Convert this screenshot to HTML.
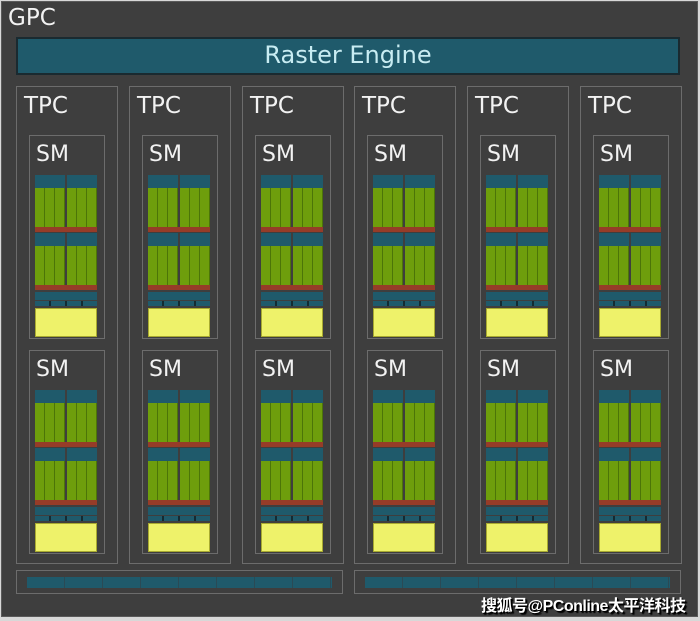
<!DOCTYPE html>
<html><head><meta charset="utf-8"><style>
*{margin:0;padding:0;box-sizing:border-box}
body{width:700px;height:621px;background:#d8d8d8;position:relative;overflow:hidden;font-family:"DejaVu Sans","Liberation Sans",sans-serif}
.gpc{position:absolute;left:1px;top:1px;width:697px;height:616px;background:#3e3e3e;border:1px solid #5a5a5a}
.t{position:absolute;color:#f2f2f2;font-size:22px;line-height:1}
.re{position:absolute;left:16px;top:37px;width:664px;height:38px;background:#1f5a6b;border:2px solid #1a2a30;color:#c8ecf2;font-size:24px;text-align:center;line-height:33px}
.tpc{position:absolute;top:86px;width:102px;height:478px;border:1px solid #6c6c6c}
.tpc span{position:absolute;left:7px;top:6px;color:#f2f2f2;font-size:23px}
.sm{position:absolute;left:12px;width:76px;height:204px;border:1px solid #6c6c6c}
.sm span{position:absolute;left:6px;top:6px;color:#f2f2f2;font-size:22px}
.sm i{position:absolute;display:block}
.tl{background:#1f5a6b}
.gr{background:repeating-linear-gradient(90deg,#6e9e0c 0 9px,#4c7508 9px 10px)}
.rd{background:#963c28}
.ye{background:#eef26a;border:1px solid #a8aa30}
.cells{background:repeating-linear-gradient(90deg,#1f5a6b 0 14px,#142a32 14px 16px)}
.bot{position:absolute;top:570px;width:327px;height:24px;border:1px solid #6c6c6c}
.bot i{position:absolute;left:10px;top:6px;width:305px;height:11px;background:repeating-linear-gradient(90deg,#1f5a6b 0 37px,#2a4a55 37px 38px)}
.wm{position:absolute;left:481px;top:592px;color:#fff;font-weight:bold;font-size:16px;font-family:"Liberation Sans","Noto Sans CJK SC",sans-serif;text-shadow:1px 1px 0 #000,2px 2px 1px #000;letter-spacing:-0.5px}
</style></head><body>
<div class="gpc"></div>
<div class="t" style="left:8px;top:7px;font-size:23px">GPC</div>
<div class="re">Raster Engine</div>

<div class="tpc" style="left:16px"><span>TPC</span>
<div class="sm" style="top:48px"><span>SM</span><i class="tl" style="left:5px;top:39px;width:30px;height:13px"></i><i class="tl" style="left:37px;top:39px;width:30px;height:13px"></i><i class="gr" style="left:5px;top:52px;width:30px;height:39px"></i><i class="gr" style="left:37px;top:52px;width:30px;height:39px"></i><i class="rd" style="left:5px;top:91px;width:62px;height:5px"></i><i class="tl" style="left:5px;top:97px;width:30px;height:13px"></i><i class="tl" style="left:37px;top:97px;width:30px;height:13px"></i><i class="gr" style="left:5px;top:110px;width:30px;height:39px"></i><i class="gr" style="left:37px;top:110px;width:30px;height:39px"></i><i class="rd" style="left:5px;top:149px;width:62px;height:5px"></i><i class="tl" style="left:5px;top:156px;width:62px;height:8px"></i><i class="cells" style="left:5px;top:165px;width:62px;height:5px"></i><i class="ye" style="left:5px;top:172px;width:62px;height:29px"></i></div>
<div class="sm" style="top:263px"><span>SM</span><i class="tl" style="left:5px;top:39px;width:30px;height:13px"></i><i class="tl" style="left:37px;top:39px;width:30px;height:13px"></i><i class="gr" style="left:5px;top:52px;width:30px;height:39px"></i><i class="gr" style="left:37px;top:52px;width:30px;height:39px"></i><i class="rd" style="left:5px;top:91px;width:62px;height:5px"></i><i class="tl" style="left:5px;top:97px;width:30px;height:13px"></i><i class="tl" style="left:37px;top:97px;width:30px;height:13px"></i><i class="gr" style="left:5px;top:110px;width:30px;height:39px"></i><i class="gr" style="left:37px;top:110px;width:30px;height:39px"></i><i class="rd" style="left:5px;top:149px;width:62px;height:5px"></i><i class="tl" style="left:5px;top:156px;width:62px;height:8px"></i><i class="cells" style="left:5px;top:165px;width:62px;height:5px"></i><i class="ye" style="left:5px;top:172px;width:62px;height:29px"></i></div>
</div>

<div class="tpc" style="left:129px"><span>TPC</span>
<div class="sm" style="top:48px"><span>SM</span><i class="tl" style="left:5px;top:39px;width:30px;height:13px"></i><i class="tl" style="left:37px;top:39px;width:30px;height:13px"></i><i class="gr" style="left:5px;top:52px;width:30px;height:39px"></i><i class="gr" style="left:37px;top:52px;width:30px;height:39px"></i><i class="rd" style="left:5px;top:91px;width:62px;height:5px"></i><i class="tl" style="left:5px;top:97px;width:30px;height:13px"></i><i class="tl" style="left:37px;top:97px;width:30px;height:13px"></i><i class="gr" style="left:5px;top:110px;width:30px;height:39px"></i><i class="gr" style="left:37px;top:110px;width:30px;height:39px"></i><i class="rd" style="left:5px;top:149px;width:62px;height:5px"></i><i class="tl" style="left:5px;top:156px;width:62px;height:8px"></i><i class="cells" style="left:5px;top:165px;width:62px;height:5px"></i><i class="ye" style="left:5px;top:172px;width:62px;height:29px"></i></div>
<div class="sm" style="top:263px"><span>SM</span><i class="tl" style="left:5px;top:39px;width:30px;height:13px"></i><i class="tl" style="left:37px;top:39px;width:30px;height:13px"></i><i class="gr" style="left:5px;top:52px;width:30px;height:39px"></i><i class="gr" style="left:37px;top:52px;width:30px;height:39px"></i><i class="rd" style="left:5px;top:91px;width:62px;height:5px"></i><i class="tl" style="left:5px;top:97px;width:30px;height:13px"></i><i class="tl" style="left:37px;top:97px;width:30px;height:13px"></i><i class="gr" style="left:5px;top:110px;width:30px;height:39px"></i><i class="gr" style="left:37px;top:110px;width:30px;height:39px"></i><i class="rd" style="left:5px;top:149px;width:62px;height:5px"></i><i class="tl" style="left:5px;top:156px;width:62px;height:8px"></i><i class="cells" style="left:5px;top:165px;width:62px;height:5px"></i><i class="ye" style="left:5px;top:172px;width:62px;height:29px"></i></div>
</div>

<div class="tpc" style="left:242px"><span>TPC</span>
<div class="sm" style="top:48px"><span>SM</span><i class="tl" style="left:5px;top:39px;width:30px;height:13px"></i><i class="tl" style="left:37px;top:39px;width:30px;height:13px"></i><i class="gr" style="left:5px;top:52px;width:30px;height:39px"></i><i class="gr" style="left:37px;top:52px;width:30px;height:39px"></i><i class="rd" style="left:5px;top:91px;width:62px;height:5px"></i><i class="tl" style="left:5px;top:97px;width:30px;height:13px"></i><i class="tl" style="left:37px;top:97px;width:30px;height:13px"></i><i class="gr" style="left:5px;top:110px;width:30px;height:39px"></i><i class="gr" style="left:37px;top:110px;width:30px;height:39px"></i><i class="rd" style="left:5px;top:149px;width:62px;height:5px"></i><i class="tl" style="left:5px;top:156px;width:62px;height:8px"></i><i class="cells" style="left:5px;top:165px;width:62px;height:5px"></i><i class="ye" style="left:5px;top:172px;width:62px;height:29px"></i></div>
<div class="sm" style="top:263px"><span>SM</span><i class="tl" style="left:5px;top:39px;width:30px;height:13px"></i><i class="tl" style="left:37px;top:39px;width:30px;height:13px"></i><i class="gr" style="left:5px;top:52px;width:30px;height:39px"></i><i class="gr" style="left:37px;top:52px;width:30px;height:39px"></i><i class="rd" style="left:5px;top:91px;width:62px;height:5px"></i><i class="tl" style="left:5px;top:97px;width:30px;height:13px"></i><i class="tl" style="left:37px;top:97px;width:30px;height:13px"></i><i class="gr" style="left:5px;top:110px;width:30px;height:39px"></i><i class="gr" style="left:37px;top:110px;width:30px;height:39px"></i><i class="rd" style="left:5px;top:149px;width:62px;height:5px"></i><i class="tl" style="left:5px;top:156px;width:62px;height:8px"></i><i class="cells" style="left:5px;top:165px;width:62px;height:5px"></i><i class="ye" style="left:5px;top:172px;width:62px;height:29px"></i></div>
</div>

<div class="tpc" style="left:354px"><span>TPC</span>
<div class="sm" style="top:48px"><span>SM</span><i class="tl" style="left:5px;top:39px;width:30px;height:13px"></i><i class="tl" style="left:37px;top:39px;width:30px;height:13px"></i><i class="gr" style="left:5px;top:52px;width:30px;height:39px"></i><i class="gr" style="left:37px;top:52px;width:30px;height:39px"></i><i class="rd" style="left:5px;top:91px;width:62px;height:5px"></i><i class="tl" style="left:5px;top:97px;width:30px;height:13px"></i><i class="tl" style="left:37px;top:97px;width:30px;height:13px"></i><i class="gr" style="left:5px;top:110px;width:30px;height:39px"></i><i class="gr" style="left:37px;top:110px;width:30px;height:39px"></i><i class="rd" style="left:5px;top:149px;width:62px;height:5px"></i><i class="tl" style="left:5px;top:156px;width:62px;height:8px"></i><i class="cells" style="left:5px;top:165px;width:62px;height:5px"></i><i class="ye" style="left:5px;top:172px;width:62px;height:29px"></i></div>
<div class="sm" style="top:263px"><span>SM</span><i class="tl" style="left:5px;top:39px;width:30px;height:13px"></i><i class="tl" style="left:37px;top:39px;width:30px;height:13px"></i><i class="gr" style="left:5px;top:52px;width:30px;height:39px"></i><i class="gr" style="left:37px;top:52px;width:30px;height:39px"></i><i class="rd" style="left:5px;top:91px;width:62px;height:5px"></i><i class="tl" style="left:5px;top:97px;width:30px;height:13px"></i><i class="tl" style="left:37px;top:97px;width:30px;height:13px"></i><i class="gr" style="left:5px;top:110px;width:30px;height:39px"></i><i class="gr" style="left:37px;top:110px;width:30px;height:39px"></i><i class="rd" style="left:5px;top:149px;width:62px;height:5px"></i><i class="tl" style="left:5px;top:156px;width:62px;height:8px"></i><i class="cells" style="left:5px;top:165px;width:62px;height:5px"></i><i class="ye" style="left:5px;top:172px;width:62px;height:29px"></i></div>
</div>

<div class="tpc" style="left:467px"><span>TPC</span>
<div class="sm" style="top:48px"><span>SM</span><i class="tl" style="left:5px;top:39px;width:30px;height:13px"></i><i class="tl" style="left:37px;top:39px;width:30px;height:13px"></i><i class="gr" style="left:5px;top:52px;width:30px;height:39px"></i><i class="gr" style="left:37px;top:52px;width:30px;height:39px"></i><i class="rd" style="left:5px;top:91px;width:62px;height:5px"></i><i class="tl" style="left:5px;top:97px;width:30px;height:13px"></i><i class="tl" style="left:37px;top:97px;width:30px;height:13px"></i><i class="gr" style="left:5px;top:110px;width:30px;height:39px"></i><i class="gr" style="left:37px;top:110px;width:30px;height:39px"></i><i class="rd" style="left:5px;top:149px;width:62px;height:5px"></i><i class="tl" style="left:5px;top:156px;width:62px;height:8px"></i><i class="cells" style="left:5px;top:165px;width:62px;height:5px"></i><i class="ye" style="left:5px;top:172px;width:62px;height:29px"></i></div>
<div class="sm" style="top:263px"><span>SM</span><i class="tl" style="left:5px;top:39px;width:30px;height:13px"></i><i class="tl" style="left:37px;top:39px;width:30px;height:13px"></i><i class="gr" style="left:5px;top:52px;width:30px;height:39px"></i><i class="gr" style="left:37px;top:52px;width:30px;height:39px"></i><i class="rd" style="left:5px;top:91px;width:62px;height:5px"></i><i class="tl" style="left:5px;top:97px;width:30px;height:13px"></i><i class="tl" style="left:37px;top:97px;width:30px;height:13px"></i><i class="gr" style="left:5px;top:110px;width:30px;height:39px"></i><i class="gr" style="left:37px;top:110px;width:30px;height:39px"></i><i class="rd" style="left:5px;top:149px;width:62px;height:5px"></i><i class="tl" style="left:5px;top:156px;width:62px;height:8px"></i><i class="cells" style="left:5px;top:165px;width:62px;height:5px"></i><i class="ye" style="left:5px;top:172px;width:62px;height:29px"></i></div>
</div>

<div class="tpc" style="left:580px"><span>TPC</span>
<div class="sm" style="top:48px"><span>SM</span><i class="tl" style="left:5px;top:39px;width:30px;height:13px"></i><i class="tl" style="left:37px;top:39px;width:30px;height:13px"></i><i class="gr" style="left:5px;top:52px;width:30px;height:39px"></i><i class="gr" style="left:37px;top:52px;width:30px;height:39px"></i><i class="rd" style="left:5px;top:91px;width:62px;height:5px"></i><i class="tl" style="left:5px;top:97px;width:30px;height:13px"></i><i class="tl" style="left:37px;top:97px;width:30px;height:13px"></i><i class="gr" style="left:5px;top:110px;width:30px;height:39px"></i><i class="gr" style="left:37px;top:110px;width:30px;height:39px"></i><i class="rd" style="left:5px;top:149px;width:62px;height:5px"></i><i class="tl" style="left:5px;top:156px;width:62px;height:8px"></i><i class="cells" style="left:5px;top:165px;width:62px;height:5px"></i><i class="ye" style="left:5px;top:172px;width:62px;height:29px"></i></div>
<div class="sm" style="top:263px"><span>SM</span><i class="tl" style="left:5px;top:39px;width:30px;height:13px"></i><i class="tl" style="left:37px;top:39px;width:30px;height:13px"></i><i class="gr" style="left:5px;top:52px;width:30px;height:39px"></i><i class="gr" style="left:37px;top:52px;width:30px;height:39px"></i><i class="rd" style="left:5px;top:91px;width:62px;height:5px"></i><i class="tl" style="left:5px;top:97px;width:30px;height:13px"></i><i class="tl" style="left:37px;top:97px;width:30px;height:13px"></i><i class="gr" style="left:5px;top:110px;width:30px;height:39px"></i><i class="gr" style="left:37px;top:110px;width:30px;height:39px"></i><i class="rd" style="left:5px;top:149px;width:62px;height:5px"></i><i class="tl" style="left:5px;top:156px;width:62px;height:8px"></i><i class="cells" style="left:5px;top:165px;width:62px;height:5px"></i><i class="ye" style="left:5px;top:172px;width:62px;height:29px"></i></div>
</div>

<div class="bot" style="left:16px"><i></i></div>
<div class="bot" style="left:354px"><i></i></div>
<div class="wm">搜狐号@PConline太平洋科技</div>
</body></html>
